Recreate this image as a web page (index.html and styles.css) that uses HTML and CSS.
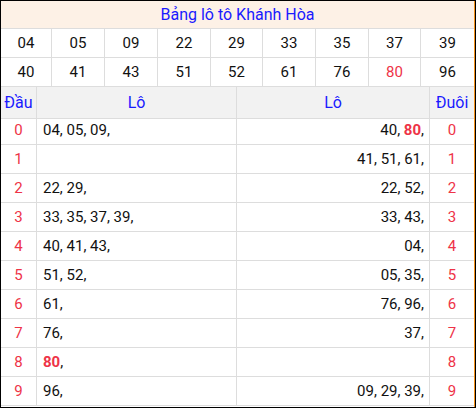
FILE: index.html
```html
<!DOCTYPE html>
<html lang="vi">
<head>
<meta charset="utf-8">
<title>Bảng lô tô Khánh Hòa</title>
<link rel="stylesheet" href="styles.css">
</head>
<body>
<div class="board">
  <div class="inner">
    <div class="title">Bảng lô tô Khánh Hòa</div>
    <div class="nums">
      <div class="n">04</div><div class="n">05</div><div class="n">09</div><div class="n">22</div><div class="n">29</div><div class="n">33</div><div class="n">35</div><div class="n">37</div><div class="n">39</div>
      <div class="n">40</div><div class="n">41</div><div class="n">43</div><div class="n">51</div><div class="n">52</div><div class="n">61</div><div class="n">76</div><div class="n red">80</div><div class="n">96</div>
    </div>
    <div class="lt">
      <div class="h c">Đầu</div><div class="h c">Lô</div><div class="h c">Lô</div><div class="h c">Đuôi</div>

      <div class="d">0</div><div class="l">04, 05, 09,</div><div class="r">40, <b>80</b>,</div><div class="d">0</div>
      <div class="d">1</div><div class="l"></div><div class="r">41, 51, 61,</div><div class="d">1</div>
      <div class="d">2</div><div class="l">22, 29,</div><div class="r">22, 52,</div><div class="d">2</div>
      <div class="d">3</div><div class="l">33, 35, 37, 39,</div><div class="r">33, 43,</div><div class="d">3</div>
      <div class="d">4</div><div class="l">40, 41, 43,</div><div class="r">04,</div><div class="d">4</div>
      <div class="d">5</div><div class="l">51, 52,</div><div class="r">05, 35,</div><div class="d">5</div>
      <div class="d">6</div><div class="l">61,</div><div class="r">76, 96,</div><div class="d">6</div>
      <div class="d">7</div><div class="l">76,</div><div class="r">37,</div><div class="d">7</div>
      <div class="d">8</div><div class="l"><b>80</b>,</div><div class="r"></div><div class="d">8</div>
      <div class="d">9</div><div class="l">96,</div><div class="r">09, 29, 39,</div><div class="d">9</div>
    </div>
  </div>
</div>
</body>
</html>
```
FILE: styles.css
```css
html, body {
  margin: 0;
  padding: 0;
  background: #fff;
}
body {
  font-family: Roboto, "Liberation Sans", Arial, sans-serif;
  color: #111;
}
.board {
  width: 476px;
  height: 408px;
  box-sizing: border-box;
  border: 1px solid #000;
  overflow: hidden;
}
.inner {
  border-right: 1px solid #f7941d;
  height: 100%;
}
.title {
  height: 28px;
  box-sizing: border-box;
  border-bottom: 1px solid #ddd;
  background: #fdf1e6;
  color: #1a1aff;
  font-size: 16px;
  line-height: 27px;
  text-align: center;
}
.nums {
  display: grid;
  grid-template-columns: 51px 53px 53px 53px 52px 53px 53px 52px 1fr;
}
.n {
  height: 29px;
  box-sizing: border-box;
  border-bottom: 1px solid #ddd;
  border-right: 1px solid #ddd;
  font-size: 15px;
  line-height: 28px;
  text-align: center;
}
.n:nth-child(9n) {
  border-right: none;
}
.red {
  color: #ee3347;
}
.lt {
  display: grid;
  grid-template-columns: 36px 200px 193px 1fr;
  grid-auto-rows: 29px;
}
.lt > div {
  box-sizing: border-box;
  border-bottom: 1px solid #ddd;
  border-right: 1px solid #ddd;
  font-size: 15px;
  line-height: 28px;
  white-space: nowrap;
}
.lt > div:nth-child(4n) {
  border-right: none;
}
.lt > .h {
  height: 32px;
  line-height: 31px;
  background: #f2f2f2;
  color: #1a1aff;
  font-size: 16px;
  text-align: center;
}
.lt .d {
  color: #ee3347;
  text-align: center;
}
.lt .l {
  padding-left: 6px;
}
.lt .r {
  text-align: right;
  padding-right: 5px;
}
.lt b {
  color: #ee3347;
  font-weight: 700;
}
```
